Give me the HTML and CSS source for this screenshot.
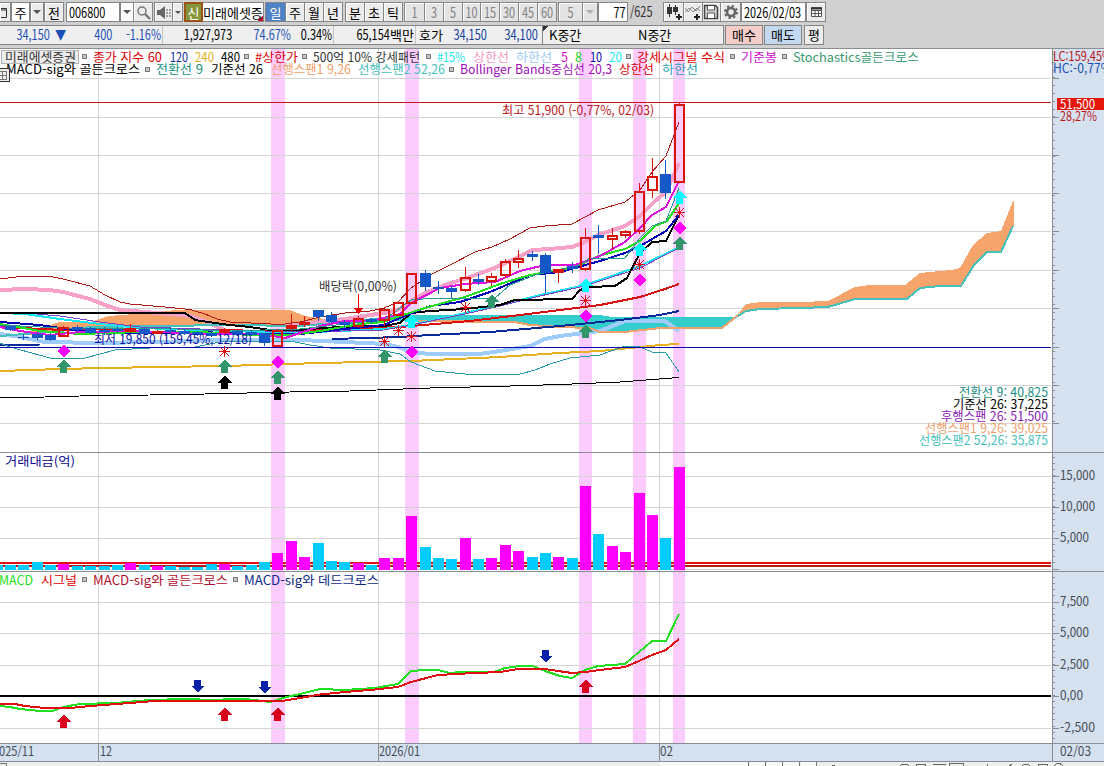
FILE: index.html
```html
<!DOCTYPE html>
<html lang="ko">
<head>
    <meta charset="UTF-8">
    <title>미래에셋증권 차트</title>
    <link rel="stylesheet" href="styles.css">
</head>
<body>
    <!-- Toolbar -->
    <div class="toolbar">
        <div class="btn cut"><svg width="9" height="18"><path d="M0 5.500H5.500V14.500H0M0 7H5" stroke="#333" fill="none"/></svg></div>
        <i></i>
        <div class="field">주</div>
        <div class="btn"><b class="caret"></b></div>
        <i></i>
        <div class="btn">전</div>
        <i></i>
        <div class="field left"><b class="n">006800</b></div>
        <div class="btn white"><b class="caret"></b></div>
        <div class="btn"><svg width="17" height="17"><circle cx="7" cy="7" r="4" fill="none" stroke="#777" stroke-width="1.500"/><path d="M10 10l5 5" stroke="#777" stroke-width="2.400"/></svg></div>
        <i></i>
        <div class="btn"><svg width="17" height="17"><path d="M2 6h3l5-4v13l-5-4H2z" fill="#666"/><path d="M11 6h2M11 9h2M11 12h2M14 6h2M14 9h2M14 12h2" stroke="#888" stroke-width="1.500"/></svg></div>
        <div class="btn"><b class="caret small"></b></div>
        <i></i>
        <div class="credit">신</div>
        <div class="field left stock">미래에셋증</div>
        <i></i>
        <div class="btn active">일</div>
        <div class="btn">주</div>
        <div class="btn">월</div>
        <div class="btn">년</div>
        <i></i>
        <div class="btn">분</div>
        <div class="btn">초</div>
        <div class="btn">틱</div>
        <i></i>
        <div class="btn off"><b class="n">1</b></div>
        <div class="btn off"><b class="n">3</b></div>
        <div class="btn off"><b class="n">5</b></div>
        <div class="btn off"><b class="n">10</b></div>
        <div class="btn off"><b class="n">15</b></div>
        <div class="btn off"><b class="n">30</b></div>
        <div class="btn off"><b class="n">45</b></div>
        <div class="btn off"><b class="n">60</b></div>
        <i></i>
        <div class="btn off"><b class="n">5</b></div>
        <div class="btn off"><b class="caret light"></b></div>
        <i></i>
        <div class="field right"><b class="n">77</b></div>
        <div class="total"><b class="n">/625</b></div>
        <i></i>
        <div class="btn"><svg width="18" height="18"><path d="M4.500 1v13M10.500 2v10" stroke="#333"/><path d="M2 4h5v7H2zM8 4h5v5H8z" fill="#333"/><path d="M14 11v6M11 14h6" stroke="#222" stroke-width="2"/></svg></div>
        <div class="btn"><svg width="17" height="18"><path d="M0 9l4-4 4 4 4-4 3 3M0 5l3 4 4-5 4 4 4-5" stroke="#888" fill="none"/><path d="M12 11v6M9 14h6" stroke="#222" stroke-width="2"/></svg></div>
        <div class="btn"><svg width="17" height="18"><path d="M1.500 2.500h11l2 2v11h-13z" fill="#ccc" stroke="#444" stroke-width="1.500"/><path d="M4.500 3v4h7V3M4.500 15v-5h7v5" fill="#fff" stroke="#555"/></svg></div>
        <div class="btn"><svg width="18" height="18"><circle cx="9" cy="9" r="4" fill="none" stroke="#666" stroke-width="2.600"/><circle cx="9" cy="9" r="6" fill="none" stroke="#666" stroke-width="2" stroke-dasharray="2.350"/></svg></div>
        <i></i>
        <div class="field left"><b class="n">2026/02/03</b></div>
        <div class="btn"><svg width="16" height="16"><path d="M3.500 3.500h10v9h-10zM3 6.500h11M3 9.500h11M7 6v7M10.500 6v7" fill="#fff" stroke="#555"/><path d="M3 4.500h11" stroke="#333" stroke-width="2"/></svg></div>
    </div>

    <!-- Quote row -->
    <div class="quote">
        <div class="box">
            <span class="blue"><b class="n">34,150</b></span>
            <span class="blue tri">▼</span>
            <span class="blue"><b class="n">400</b></span>
            <span class="blue sep"><b class="n">-1.16%</b></span>
            <span><b class="n">1,927,973</b></span>
            <span class="blue"><b class="n">74.67%</b></span>
            <span class="sep"><b class="n">0.34%</b></span>
            <span class="sep"><b class="n">65,154</b>백만</span>
            <span>호가</span>
            <span class="navy"><b class="n">34,150</b></span>
            <span class="navy end"><b class="n">34,100</b></span>
            <span class="corner">K중간</span>
            <span>N중간</span>
        </div>
        <div class="order buy">매수</div>
        <div class="order sell">매도</div>
        <div class="order">평</div>
    </div>

    <!-- Chart -->
    <div class="chart">
        <svg id="price" class="plot" viewBox="0 48 1052 404" width="1052" height="404">
            <g class="bands"></g>
            <g class="grid"></g>
            <!-- Ichimoku cloud -->
            <g id="cloud">
                <path fill="#f7a36c" d="M15 334L30 331 60 322H90L108 316 135 314 160 312 175 310H290L305 316 330 320V323L300 325H230L90 326 60 332 30 335z"/>
                <path fill="#35cccc" d="M290 326L345 321 384 317 411 315H600L612 317H738L722 328H660L630 332H600L575 327 530 324 515 321H400L330 324z"/>
                <path fill="#f7a36c" d="M738 314L746 304 760 302H800L828 301 855 287 870 285H905L920 273 940 271 952 270 960 268 973 245 987 233 1001 231 1013 201H1014V226L1001 252H987L974 265 961 286H940L920 288 907 299H855L828 307 800 308 760 309 746 311z"/>
            </g>
            <g id="lines"></g>
            <path d="M0 347.500H1051" stroke="#0808b0"/>
            <path d="M0 102.500H1051" stroke="#c01818"/>
            <g id="candles"></g>
            <g id="marks"></g>
            <path d="M358.500 294V309" stroke="#e00"/><path d="M353.500 308h10l-5 6z" fill="#e00"/>
            <!-- Legend -->
            <rect x="1.500" y="50.500" width="77" height="13" fill="#ececec" stroke="#b5b5b5"/>
            <g class="txt">
                <text x="5" y="62" textLength="71" fill="#333">미래에셋증권</text>
                <text x="93" y="62" textLength="69" fill="#d00">종가 지수 60</text>
                <text x="170" y="62" textLength="18" fill="#0a2a9a">120</text>
                <text x="195" y="62" textLength="19" fill="#e0b020">240</text>
                <text x="221" y="62" textLength="19" fill="#000">480</text>
                <text x="255" y="62" textLength="43" fill="#d00">#상한가</text>
                <text x="313" y="62" textLength="107" fill="#333">500억 10% 강세패턴</text>
                <text x="437" y="62" textLength="28" fill="#1ae6f0">#15%</text>
                <text x="473" y="62" textLength="36" fill="#f59ac0">상한선</text>
                <text x="516" y="62" textLength="36" fill="#9cc8f5">하한선</text>
                <text x="561" y="62" textLength="7" fill="#d010d0">5</text>
                <text x="575" y="62" textLength="7" fill="#20d820">8</text>
                <text x="590" y="62" textLength="12" fill="#0000b0">10</text>
                <text x="609" y="62" textLength="13" fill="#1ae6f0">20</text>
                <text x="637" y="62" textLength="88" fill="#d00">강세시그널 수식</text>
                <text x="741" y="62" textLength="36" fill="#d010d0">기준봉</text>
                <text x="793" y="62" textLength="126" fill="#379a70">Stochastics골든크로스</text>
                <text x="6" y="74" textLength="134" fill="#000">MACD-sig와 골든크로스</text>
                <text x="156" y="74" textLength="47" fill="#178f80">전환선 9</text>
                <text x="211" y="74" textLength="52" fill="#000">기준선 26</text>
                <text x="271" y="74" textLength="80" fill="#f0a06a">선행스팬1 9,26</text>
                <text x="358" y="74" textLength="87" fill="#45c0bb">선행스팬2 52,26</text>
                <text x="460" y="74" textLength="152" fill="#a010b8">Bollinger Bands중심선 20,3</text>
                <text x="619" y="74" textLength="35" fill="#d00">상한선</text>
                <text x="662" y="74" textLength="36" fill="#2a9fb0">하한선</text>
                <text x="502" y="115" textLength="152" fill="#b81818">최고 51,900 (-0,77%, 02/03)</text>
                <text x="94" y="344" textLength="158" fill="#0a0aa0">최저 19,850 (159,45%, 12/18)</text>
                <text x="319" y="291" textLength="78" fill="#333">배당락(0,00%)</text>
                <text x="959" y="397" textLength="89" fill="#178f80">전환선 9: 40,825</text>
                <text x="953" y="409" textLength="95" fill="#000">기준선 26: 37,225</text>
                <text x="941" y="421" textLength="107" fill="#8a20b8">후행스팬 26: 51,500</text>
                <text x="925" y="433" textLength="123" fill="#f0a06a">선행스팬1 9,26: 39,025</text>
                <text x="919" y="445" textLength="129" fill="#45c0bb">선행스팬2 52,26: 35,875</text>
            </g>
            <g class="dots" id="dots1"></g>
            <g stroke="#333" fill="#eee"><rect x="-1.500" y="68.500" width="11" height="13"/><path d="M0 71.500H7M0 75.500H7M0 79.500H7M2.500 71V80M6.500 71V80" stroke="#777"/></g>
        </svg>
        <svg id="price-axis" class="axis" viewBox="1052 48 52 404" width="52" height="404">
            <g class="ticks"></g>
            <rect x="1057" y="98" width="47" height="12" fill="#e5170a"/>
            <g class="txt">
                <text x="1053" y="61" textLength="59" fill="#b81818">LC:159,45%</text>
                <text x="1053" y="73" textLength="59" fill="#1a50b0">HC:-0,77%</text>
                <text x="1060" y="109" textLength="35" fill="#fff">51,500</text>
                <text x="1060" y="121" textLength="37" fill="#b81818">28,27%</text>
            </g>
        </svg>

        <svg id="volume" class="plot" viewBox="0 452 1052 119" width="1052" height="119">
            <g class="bands"></g>
            <g class="grid"></g>
            <path d="M0 563H1051" stroke="#e51010" stroke-width="2"/>
            <path d="M0 566H1051" stroke="#b01c1c" stroke-width="2"/>
            <g id="bars"></g>
            <g class="txt"><text x="5" y="466" textLength="70" fill="#0a0a90">거래대금(억)</text></g>
        </svg>
        <svg id="volume-axis" class="axis" viewBox="1052 452 52 119" width="52" height="119">
            <g class="ticks"></g>
            <g class="txt">
                <text x="1060" y="480" textLength="35">15,000</text>
                <text x="1060" y="511" textLength="35">10,000</text>
                <text x="1060" y="542" textLength="29">5,000</text>
            </g>
        </svg>

        <svg id="macd" class="plot" viewBox="0 571 1052 172" width="1052" height="172">
            <g class="bands"></g>
            <g class="grid"></g>
            <path d="M0 696H1051" stroke="#000" stroke-width="2"/>
            <g id="macd-lines"></g>
            <g id="macd-marks"></g>
            <g class="txt">
                <text x="-1" y="585" textLength="34" fill="#20e020">MACD</text>
                <text x="41" y="585" textLength="36" fill="#d00">시그널</text>
                <text x="93" y="585" textLength="135" fill="#b01030">MACD-sig와 골든크로스</text>
                <text x="244" y="585" textLength="135" fill="#102a88">MACD-sig와 데드크로스</text>
            </g>
            <g class="dots" id="dots2"></g>
        </svg>
        <svg id="macd-axis" class="axis" viewBox="1052 571 52 172" width="52" height="172">
            <g class="ticks"></g>
            <g class="txt">
                <text x="1060" y="606" textLength="29">7,500</text>
                <text x="1060" y="637" textLength="29">5,000</text>
                <text x="1060" y="669" textLength="29">2,500</text>
                <text x="1060" y="700" textLength="23">0,00</text>
                <text x="1060" y="732" textLength="35">-2,500</text>
            </g>
        </svg>

        <svg class="dates" viewBox="0 743 1104 18" width="1104" height="18">
            <path d="M98.500 743V761M378.500 743V761M659.500 743V761M1052.500 743V761" stroke="#8a8d92"/>
            <g class="txt">
                <text x="-7" y="756" textLength="41">2025/11</text>
                <text x="100" y="756" textLength="12">12</text>
                <text x="379" y="756" textLength="41">2026/01</text>
                <text x="660" y="756" textLength="13">02</text>
                <text x="1060" y="756" textLength="31">02/03</text>
            </g>
        </svg>
    </div>

    <!-- Bottom strip -->
    <svg class="strip" viewBox="0 761 1104 5" width="1104" height="5">
        <path d="M660 762h88v4h-88zM750 762h15v4h-15zM767 762h15v4h-15zM784 762h15v4h-15zM801 762h15v4h-15z" fill="#f8f8f8"/>
        <path d="M0 763.500H6.500V766M748.500 762V766M765.500 762V766M782.500 762V766M799.500 762V766M816.500 762V766" fill="none" stroke="#777"/>
        <path d="M832 765.500h3M900 765.500q4-3 9 0M916.500 766v-2h9v2M933 764.500h13M949.500 766v-3h14v3M987 764v2M1009 766l3-2M1022 766q4-4 8 0M1038.500 766v-2h9v2M1054 765.500q4-4 9 0" fill="none" stroke="#666"/>
    </svg>
    <script src="chart.js"></script>
</body>
</html>
```
FILE: styles.css
```css
* {
    margin: 0;
    padding: 0;
    box-sizing: border-box;
}
body {
    width: 1104px;
    height: 766px;
    overflow: hidden;
    background: #d0d0d0;
    color: #000;
    font: 13px/17px "Noto Sans CJK KR", sans-serif;
    white-space: nowrap;
}
svg {
    display: block;
}

/* Narrow digits */
.n {
    display: inline-block;
    font-size: 14px;
    font-weight: 400;
    transform: scaleX(0.78);
}

/* Toolbar */
.toolbar {
    display: grid;
    grid-template-columns:
        10px 1px 19px 13px 1px 19px 3px
        54px 13px 19px 2px
        18px 10px 2px
        19px 61px 1px
        20px 19px 19px 19px 3px
        19px 19px 19px 2px
        20px 19px 19px 18px 19px 19px 19px 19px 2px
        24px 15px 1px
        30px 28px 7px
        20px 19px 18px 20px 1px
        65px 19px;
    height: 25px;
    padding: 2px 0 3px;
}
.btn, .field, .credit {
    display: flex;
    align-items: center;
    justify-content: center;
    height: 20px;
    border: 1px solid #858585;
}
.btn {
    background: #ececec;
    box-shadow: inset 1px 1px #fff;
    margin-right: -1px;
}
.btn.cut {
    border-left: none;
}
.btn.white, .field {
    background: #fff;
}
.btn.active {
    background: #4f82c4;
    color: #fff;
    box-shadow: none;
}
.btn.off {
    background: #e4e4e4;
    color: #808080;
}
.field.left {
    justify-content: flex-start;
    padding-left: 2px;
}
.left .n, .total .n {
    transform-origin: left;
}
.left .n {
    width: 0;
}
.field.right {
    justify-content: flex-end;
    padding-right: 1px;
}
.right .n, .box .n {
    transform-origin: right;
}
.btn .n {
    width: 100%;
    display: flex;
    justify-content: center;
}
.field.stock {
    border-left: none;
    padding-left: 0;
    background: linear-gradient(135deg, transparent 93%, #c8102a 93%) #fff;
}
.credit {
    border: 2px solid #9a5418;
    background: #86963a;
    color: #fff;
}
.total {
    padding: 1px 0 0 2px;
    color: #333;
}
.caret {
    border: 4px solid transparent;
    border-top-color: #555;
    border-bottom: none;
}
.caret.small {
    border-width: 3px;
    border-bottom: none;
}
.caret.light {
    border-top-color: #aaa;
}

/* Quote row */
.quote {
    display: flex;
    height: 23px;
}
.box {
    display: grid;
    grid-template-columns: 50px 16px 46px 51px 69px 59px 43px 82px 27px 44px 56px 95px 60px;
    width: 724px;
    height: 20px;
    border: 1px solid #858585;
    border-left: none;
    background: #efefef;
    margin-right: 1px;
    text-align: right;
}
.box span:nth-child(12) {
    text-align: left;
    padding-left: 6px;
}
.box span:nth-child(13) {
    text-align: left;
}
.blue {
    color: #1b4fb5;
}
.navy {
    color: #12409a;
}
.tri {
    font-family: "DejaVu Sans", sans-serif;
    font-size: 14px;
}
.sep {
    border-right: 1px solid #c4c4c4;
    padding-right: 1px;
}
.end {
    border-right: 1px solid #858585;
    padding-right: 4px;
}
.corner {
    background: linear-gradient(135deg, #333 4px, transparent 4px);
}
.order {
    width: 38px;
    height: 20px;
    margin-right: 1px;
    border: 1px solid #858585;
    background: #ececec;
    text-align: center;
}
.order:last-child {
    width: 20px;
    margin-left: 1px;
}
.buy {
    background: #f3cdc8;
}
.sell {
    background: #c3d9ef;
}

/* Chart */
.chart {
    display: grid;
    grid-template-columns: 1052px 52px;
    background: #fff;
}
.plot, .axis, .dates, .strip {
    shape-rendering: crispEdges;
}
.axis {
    background: #d6e1ef;
}
.dates {
    grid-column: 1 / 3;
    background: #d6e1ef;
}
.strip {
    background: #eee;
}
.txt {
    font-size: 12.5px;
    fill: #444b55;
}
.bands {
    fill: #fcccff;
}
.grid {
    stroke: #d4d4d4;
}
.ticks {
    stroke: #8a8d92;
}
.dots {
    fill: #c8c8c8;
    stroke: #777;
}
```
FILE: chart.js
```js
const $ = s => document.querySelector(s);

// Shared grid and highlight bands
const panels = [
    ['#price', '#price-axis', 48, 452, [78, 117, 155, 193, 231, 270, 308, 347, 385, 423]],
    ['#volume', '#volume-axis', 452, 571, [476, 507, 538, 569]],
    ['#macd', '#macd-axis', 571, 743, [602, 633, 665, 696, 728]]
];
const bands = [[271, 14], [405, 14], [579, 13], [633, 13], [673, 12]];
panels.forEach(([plot, axis, top, bottom, rows]) => {
    $(plot + ' .bands').innerHTML = bands.map(b => `<rect x="${b[0]}" y="${top}" width="${b[1]}" height="${bottom - top}"/>`).join('');
    let d = rows.map(y => `M0 ${y + .5}H1051`).join('');
    d += [98.5, 378.5, 659.5].map(x => `M${x} ${top}V${bottom}`).join('');
    $(plot + ' .grid').innerHTML = `<path d="${d}"/>`;
    const step = (rows[1] - rows[0]) / 5;
    let t = rows.map(y => `M1052 ${y + .5}h7`).join('');
    for (let y = rows[0] - step * 4; y < bottom; y += step) {
        if (y > top + 2 && !(plot == '#price' && y > 424)) t += `M1052 ${Math.floor(y) + .5}h3`;
    }
    $(axis + ' .ticks').innerHTML = `<path d="${t}M1052.5 ${top}V${bottom}"/>`;
    $(plot).insertAdjacentHTML('beforeend', `<path d="M0 ${top + .5}H1052" stroke="#8a8d92"/>`);
    $(axis).insertAdjacentHTML('beforeend', `<path d="M1052 ${top + .5}H1104" stroke="#8a8d92"/>`);
});
$('.dates').insertAdjacentHTML('afterbegin', '<path d="M0 743.5H1104" stroke="#8a8d92"/>');
$('.strip').insertAdjacentHTML('afterbegin', '<path d="M0 761.5H1104" stroke="#8a8d92"/>');

// color, width, points
const lines = [
    ['#f7a0c8', 4, '0,290 25,289 50,290 63,292 90,299 105,305 120,310 145,312 170,314 190,316 205,321 215,326 225,330'],
    ['#f7a0c8', 4, '285,326 310,323 345,319 370,315 384,313 398,310 411,301 425,293 445,285 470,277 492,269 510,261 533,250 550,249 572,247 585,242 598,235 625,226 640,216 655,201 666,192 679,163'],
    ['#9fccfa', 4, '0,334 20,337 45,342 100,343 200,341 215,340 300,340 345,342 385,344 398,347 411,352 430,354 480,354 500,351 530,346 545,339 560,336 600,331 625,321 665,321 679,331'],
    ['#45c0bb', 2, '0,336 60,331 90,327 230,325 300,326 345,322 411,317'],
    ['#f0a06a', 2, '411,321 515,322 530,325 560,327 590,328 600,332 625,332 660,328 722,328 738,315'],
    ['#45c0bb', 2, '738,316 746,311 760,309 800,308 828,307 855,299 907,299 920,288 940,286 961,286 974,265 987,252 1001,252 1013,226'],
    ['#e6b020', 2, '0,371 60,369 105,368 160,367 225,366 320,363 411,361 500,357 560,353 600,351 620,349 660,345 679,344'],
    ['#000', 1, '0,397.5 45,397 97,395.5 150,395 205,394 290,392 350,391 430,388 510,386 560,384.5 620,382 679,377.5'],
    ['#0a2a9a', 2, '0,345 40,344.5'],
    ['#0a2a9a', 2, '332,339 400,337 430,335 490,332 560,326 620,320 660,315 679,311'],
    ['#d81010', 2, '0,327 63,330 150,328 200,330 285,331 340,329 400,327 470,321 520,315 560,310 600,305 640,297 665,289 679,284'],
    ['#2a9aa8', 1, '0,343 10,347 50,358 85,358 115,350 150,348 195,347 210,344 225,341 290,341 310,345 330,348 380,350 400,354 411,362 435,371 465,374 520,374 535,370 550,364 570,358 600,355 625,346 640,347 652,352 666,353 679,372'],
    ['#1ae6f0', 2, '0,313 25,314 60,319 100,324 140,328 230,331 290,333 340,331 384,329 411,325 465,313 500,305 540,295 585,285 600,280 640,266 665,254 679,247'],
    ['#7a40c8', 1, '0,312 25,313 60,316 100,322 140,327 230,330 300,332 384,330 411,325 465,314 500,306 540,296 585,286 600,281 640,268 665,255 679,248'],
    ['#000', 2, '0,313 185,313 195,320 215,323 230,325 250,327 270,330 300,330 320,328 345,327 384,326 400,323 411,313 430,311 465,309 500,305 515,300 572,299 580,290 590,287 615,286 627,278 640,253 652,242 666,241 679,215'],
    ['#0000b8', 2, '0,322 40,325 80,331 140,333 200,332 250,334 300,334 345,329 384,325 400,318 430,306 460,302 490,292 530,275 560,272 600,261 625,253 640,246 666,231 679,215'],
    ['#20e020', 2, '0,324 40,331 80,334 140,332 200,332 250,335 290,335 320,331 360,324 384,322 400,316 425,308 465,297 500,284 530,275 575,267 598,256 625,249 640,241 655,226 667,221 679,203'],
    ['#e010e0', 2, '0,327 20,331 50,335 80,332 140,331 200,334 260,334 285,338 300,333 320,326 345,321 371,321 400,314 411,303 440,288 465,284 495,282 520,271 545,265 575,265 600,256 625,242 640,228 652,215 666,207 679,181'],
    ['#2a9a90', 1, '0,325 40,327 90,329 150,328 230,331 300,329 345,324 384,320 400,308 411,300 435,298 495,298 510,285 535,275 580,265 590,258 625,258 640,238 652,226 666,221 679,188'],
    ['#b01818', 1, '0,279 20,276.5 50,276.5 63,279 90,286 105,295 120,302 130,304 165,307 190,309.5 205,314 217,319 230,322 271,324 285,324 300,322 320,317 345,313 370,311 384,308 398,302 411,288 432,274 450,265 475,252 492,247 510,239 530,228 545,226 572,224 598,210 625,202 640,190 652,172 666,156 679,122']
];
const polys = list => list.map(l => `<polyline fill="none" stroke="${l[0]}" stroke-width="${l[1]}" points="${l[2]}"/>`).join('');
$('#lines').innerHTML = polys(lines);
$('#macd-lines').innerHTML = polys([
    ['#20e020', 2, '0,706 10,707 20,709 40,711 53,711 63,707 80,704 115,703 150,700 185,699 215,700 240,698.5 255,700 270,702 283,698 300,694 320,689 345,690 375,688 398,684 411,671 425,670 438,670 450,673 465,671.5 495,671.5 505,668 520,666 533,666 545,671 560,676 572,678 585,670 598,666 612,665 625,664 652,641 666,641 679,614'],
    ['#e01010', 2, '0,703.5 15,704 25,706 40,707.5 75,707.5 90,706 130,703 160,700.5 285,700.5 300,698 320,694.5 345,692 375,689.5 398,687 411,682 438,675 465,673.5 500,672 518,669 545,669 558,671 572,673 585,672 600,670 625,667 639,661 652,655 666,650 679,639']
]);

// x, high, body top, body bottom, low, type (r hollow, f filled red, b blue)
const candles = [
    [10, 325, 326, 330, 331, 'b'], [23, 334, 337, 338, 340, 'b'], [37, 332, 334, 338, 340, 'b'], [50, 333, 335, 340, 341, 'b'],
    [63, 326, 327, 337, 337, 'r'], [77, 325, 327, 330, 332, 'b'], [90, 327, 328, 333, 334, 'b'], [104, 327, 330, 332, 335, 'b'],
    [117, 326, 329, 331, 333, 'b'], [130, 324, 328, 332, 333, 'r'], [144, 327, 329, 334, 335, 'b'], [157, 330, 331, 334, 334, 'f'],
    [170, 327, 330, 332, 334, 'b'], [184, 329, 331, 334, 335, 'b'], [197, 331, 332, 335, 336, 'b'], [211, 331, 333, 336, 337, 'b'],
    [224, 328, 329, 333, 334, 'r'], [237, 330, 331, 335, 336, 'b'], [251, 330, 332, 335, 336, 'b'], [264, 333, 333, 343, 346, 'b'],
    [277, 329, 330, 347, 347, 'r'], [291, 314, 325, 329, 331, 'f'], [304, 316, 322, 325, 327, 'f'], [318, 310, 310, 317, 321, 'b'],
    [331, 312, 315, 322, 323, 'b'], [344, 320, 322, 325, 328, 'b'], [358, 316, 318, 327, 328, 'r'], [371, 318, 319, 322, 324, 'b'],
    [384, 308, 309, 321, 326, 'r'], [398, 301, 302, 316, 316, 'r'], [411, 273, 273, 304, 304, 'r'], [425, 270, 273, 287, 291, 'b'],
    [438, 281, 287, 289, 294, 'b'], [451, 286, 288, 292, 298, 'b'], [465, 267, 277, 291, 292, 'r'], [478, 274, 279, 282, 285, 'b'],
    [491, 273, 276, 282, 286, 'r'], [505, 259, 261, 276, 278, 'r'], [518, 250, 258, 263, 268, 'r'], [532, 251, 254, 257, 261, 'b'],
    [545, 253, 255, 273, 293, 'b'], [558, 269, 269, 273, 283, 'f'], [572, 262, 266, 269, 273, 'b'], [585, 228, 237, 270, 271, 'r'],
    [598, 225, 235, 238, 254, 'b'], [612, 228, 235, 240, 250, 'r'], [625, 230, 231, 236, 238, 'r'], [639, 183, 191, 232, 234, 'r'],
    [652, 158, 176, 191, 198, 'r'], [665, 160, 174, 193, 199, 'b'], [679, 103, 104, 183, 183, 'r']
];
$('#candles').innerHTML = candles.map(([x, hi, t, b, lo, c]) => {
    const col = c == 'b' ? '#1458c8' : '#d8150c';
    const body = c == 'r'
        ? `<rect x="${x - 4}" y="${t + 1}" width="9" height="${b - t - 2}" fill="none" stroke="${col}" stroke-width="2"/>`
        : `<rect x="${x - 5}" y="${t}" width="11" height="${b - t}" fill="${col}"/>`;
    return `<path d="M${x + .5} ${hi}V${t}M${x + .5} ${b}V${lo}" stroke="${col}"/>` + body;
}).join('');

// Volume bars, c = down day
const volume = [
    [-3, 565, 'c'], [10, 565, 'c'], [23, 565, 'c'], [37, 562, 'c'], [50, 565, 'c'], [63, 564], [77, 566, 'c'], [90, 566, 'c'],
    [104, 566, 'c'], [117, 565, 'c'], [130, 563], [144, 565, 'c'], [157, 566], [170, 566, 'c'], [184, 567, 'c'], [197, 567, 'c'],
    [211, 564, 'c'], [224, 564], [237, 566, 'c'], [251, 565, 'c'], [264, 562, 'c'], [277, 553], [291, 541], [304, 557],
    [318, 543, 'c'], [331, 561, 'c'], [344, 562, 'c'], [358, 563], [371, 565, 'c'], [384, 558], [398, 558], [411, 516],
    [425, 547, 'c'], [438, 558, 'c'], [451, 559, 'c'], [465, 538], [478, 559, 'c'], [491, 558], [505, 545], [518, 551],
    [532, 557, 'c'], [545, 553, 'c'], [558, 557], [572, 558, 'c'], [585, 486], [598, 534, 'c'], [612, 546], [625, 552],
    [639, 493], [652, 515], [665, 538, 'c'], [679, 467]
];
$('#bars').innerHTML = volume.map(v => `<rect x="${v[0] - 5}" y="${v[1]}" width="11" height="${570 - v[1]}" fill="${v[2] ? '#00ccff' : '#ff00ff'}"/>`).join('');

// Signal marks
const up = (x, y, c) => `<path d="M${x + .5} ${y - 6.5}l7 7h-3.5v6h-7v-6h-3.5z" fill="${c}"/>`;
const down = (x, y, c) => `<path d="M${x + .5} ${y + 6.5}l7 -7h-3.5v-6h-7v6h-3.5z" fill="${c}"/>`;
const diamond = (x, y) => `<path d="M${x + .5} ${y - 6.5}l6.5 6.5l-6.5 6.5l-6.5 -6.5z" fill="#ff00ff"/>`;
const star = (x, y) => `<path d="M${x - 5} ${y + .5}h11M${x + .5} ${y - 5}v11M${x - 4} ${y - 4}l9 9M${x + 5} ${y - 4}l-9 9" stroke="#d81010"/>`;
let m = '';
[[63, 366], [224, 366], [277, 377], [384, 356], [491, 301], [585, 331], [679, 243]].forEach(p => m += up(...p, '#32966a'));
[[224, 382], [277, 393]].forEach(p => m += up(...p, '#000'));
[[411, 321], [585, 285], [639, 249], [679, 197]].forEach(p => m += up(...p, '#00ffff'));
[[63, 351], [277, 362], [411, 352], [585, 316], [639, 280], [679, 228]].forEach(p => m += diamond(...p));
[[224, 351], [384, 341], [398, 330], [411, 336], [465, 307], [585, 300], [639, 264], [679, 212]].forEach(p => m += star(...p));
$('#marks').innerHTML = m;
$('#macd-marks').innerHTML =
    [[197, 686], [264, 687], [545, 656]].map(p => down(...p, '#0a22a8')).join('') +
    [[63, 721], [224, 714], [277, 714], [585, 686]].map(p => up(...p, '#d8001c')).join('');

// Legend separators
const dot = (x, y) => `<rect x="${x + .5}" y="${y + .5}" width="4" height="4"/>`;
$('#dots1').innerHTML = [82, 244, 302, 426, 626, 730, 782].map(x => dot(x, 54)).join('') + [145, 449].map(x => dot(x, 67)).join('');
$('#dots2').innerHTML = [82, 233].map(x => dot(x, 577)).join('');

document.querySelectorAll('text').forEach(t => t.setAttribute('lengthAdjust', 'spacingAndGlyphs'));
```
